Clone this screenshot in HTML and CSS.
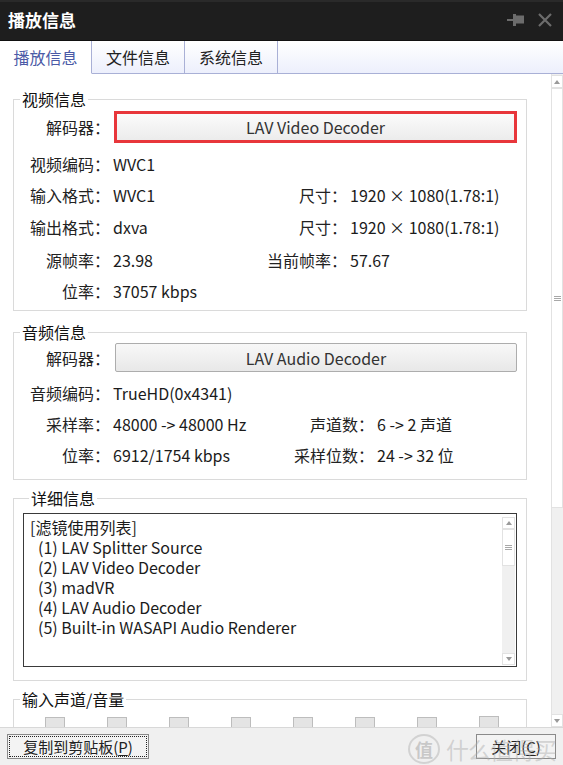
FILE: index.html
```html
<!DOCTYPE html>
<html lang="zh-CN">
<head>
<meta charset="utf-8">
<title>播放信息</title>
<link rel="stylesheet" href="styles.css">
</head>
<body>
<div class="window">
  <header class="titlebar">
    <span class="title">播放信息</span>
    <div class="tb-icons">
      <svg class="pin" width="17" height="12" viewBox="0 0 17 12"><rect x="0" y="5" width="6" height="2" fill="#6c6c6c"/><rect x="6" y="0" width="3" height="12" fill="#6c6c6c"/><rect x="9" y="1.5" width="8" height="8" fill="#6c6c6c"/></svg>
      <svg class="close" width="14" height="14" viewBox="0 0 14 14"><path d="M1 1 L13 13 M13 1 L1 13" stroke="#6c6c6c" stroke-width="2.2" fill="none"/></svg>
    </div>
  </header>
  <nav class="tabs">
    <div class="tab active">播放信息</div>
    <div class="tab">文件信息</div>
    <div class="tab">系统信息</div>
    <div class="tab-fill"></div>
  </nav>
  <div class="main">
    <div class="content">
      <fieldset class="group g-video">
        <legend>视频信息</legend>
        <div class="grid grid-video">
          <span class="lbl first">解码器：</span><div class="dec-btn hl">LAV Video Decoder</div>
          <span class="lbl">视频编码：</span><span class="val wide">WVC1</span>
          <span class="lbl">输入格式：</span><span class="val">WVC1</span><span class="lbl">尺寸：</span><span class="val">1920 × 1080(1.78:1)</span>
          <span class="lbl">输出格式：</span><span class="val">dxva</span><span class="lbl">尺寸：</span><span class="val">1920 × 1080(1.78:1)</span>
          <span class="lbl">源帧率：</span><span class="val">23.98</span><span class="lbl">当前帧率：</span><span class="val">57.67</span>
          <span class="lbl">位率：</span><span class="val wide">37057 kbps</span>
        </div>
      </fieldset>
      <fieldset class="group g-audio">
        <legend>音频信息</legend>
        <div class="grid grid-audio">
          <span class="lbl first">解码器：</span><div class="dec-btn">LAV Audio Decoder</div>
          <span class="lbl">音频编码：</span><span class="val wide">TrueHD(0x4341)</span>
          <span class="lbl">采样率：</span><span class="val">48000 -&gt; 48000 Hz</span><span class="lbl">声道数：</span><span class="val">6 -&gt; 2 声道</span>
          <span class="lbl">位率：</span><span class="val">6912/1754 kbps</span><span class="lbl">采样位数：</span><span class="val">24 -&gt; 32 位</span>
        </div>
      </fieldset>
      <fieldset class="group g-detail">
        <legend>详细信息</legend>
        <div class="listbox">
          <div class="list-text">
            <div class="line">[滤镜使用列表]</div>
            <div class="line item">(1) LAV Splitter Source</div>
            <div class="line item">(2) LAV Video Decoder</div>
            <div class="line item">(3) madVR</div>
            <div class="line item">(4) LAV Audio Decoder</div>
            <div class="line item">(5) Built-in WASAPI Audio Renderer</div>
          </div>
          <div class="sb sb-small">
            <div class="sb-btn"><span class="arr up"></span></div>
            <div class="sb-thumb t-small"><span class="grip"></span></div>
            <div class="sb-track"></div>
            <div class="sb-btn"><span class="arr down"></span></div>
          </div>
        </div>
      </fieldset>
      <fieldset class="group g-input">
        <legend>输入声道/音量</legend>
        <div class="meters">
          <span class="meter"></span><span class="meter"></span><span class="meter"></span><span class="meter"></span>
          <span class="meter"></span><span class="meter"></span><span class="meter"></span><span class="meter tall"></span>
        </div>
      </fieldset>
    </div>
    <div class="sb sb-main">
      <div class="sb-btn"><span class="arr up"></span></div>
      <div class="sb-thumb t-main"><span class="grip"></span></div>
      <div class="sb-track"></div>
      <div class="sb-btn"><span class="arr down"></span></div>
    </div>
  </div>
  <footer class="bottombar">
    <button class="wbtn copy"><span class="focus">复制到剪贴板(<u>P</u>)</span></button>
    <button class="wbtn closebtn">关闭(<u>C</u>)</button>
    <div class="watermark"><span class="wm-circle">值</span><span class="wm-text">什么值得买</span></div>
  </footer>
</div>
</body>
</html>
```
FILE: styles.css
```css
* { box-sizing: border-box; }
html, body { margin: 0; padding: 0; }
body {
  width: 563px;
  height: 765px;
  overflow: hidden;
  font-family: "Noto Sans CJK SC", "Noto Sans", sans-serif;
  font-size: 16px;
  color: #1b1b1b;
  background: #ffffff;
}
.window { width: 563px; height: 765px; display: flex; flex-direction: column; }

/* title bar */
.titlebar {
  height: 41px;
  flex: none;
  background: #1e1e1e;
  border-top: 2px solid #2a2a2a;
  border-bottom: 1px solid #111;
  display: flex;
  align-items: center;
  justify-content: space-between;
  padding: 0 11px 0 8px;
}
.title { color: #ffffff; font-weight: bold; font-size: 17px; line-height: 20px; margin-top: -2px; }
.tb-icons { display: flex; align-items: center; gap: 14px; margin-top: -2px; }
.pin { display: block; }
.close { display: block; }

/* tabs */
.tabs {
  height: 33px;
  flex: none;
  display: flex;
  background: linear-gradient(#ffffff, #eceffc);
}
.tab {
  width: 93px;
  height: 33px;
  border-right: 1px solid #a9b0d6;
  border-bottom: 1px solid #a9b0d6;
  display: flex;
  align-items: center;
  justify-content: center;
  font-size: 16px;
  line-height: 20px;
  color: #222;
  padding-bottom: 1px;
}
.tab.active { width: 92px; background: #ffffff; border-bottom-color: #ffffff; color: #4b5aa6; }
.tab-fill { flex: 1; border-bottom: 1px solid #a9b0d6; }

/* main area */
.main { flex: 1; display: flex; min-height: 0; }
.content { flex: 1; overflow: hidden; padding-top: 15px; background: #fff; }

.group {
  margin: 0 0 0 13px;
  width: 514px;
  padding: 0;
  border: 1px solid #dadada;
  min-inline-size: 0;
}
.group legend {
  margin-left: 6px;
  padding: 0 2px;
  font-size: 16px;
  line-height: 20px;
  color: #111;
}
.g-video { padding: 2px 9px 4px 0; }
.g-audio { margin-top: 11px; padding: 0 9px 8px 0; }
.g-detail { margin-top: 8px; padding: 5px 9px 13px 9px; }
.g-input { margin-top: 8px; height: 60px; padding: 0; }

.grid { display: grid; column-gap: 3px; align-items: center; }
.grid-video { grid-template-columns: 96px 141px 90px 1fr; grid-template-rows: 37px 32px 30px 34px 32px 30px; }
.grid-audio { grid-template-columns: 96px 168px 90px 1fr; grid-template-rows: 35px 32px 30px 32px; }
.lbl { text-align: right; white-space: nowrap; line-height: 20px; color: #222; }
.lbl.first { align-self: start; margin-top: 6px; }
.val { white-space: nowrap; line-height: 20px; color: #1b1b1b; }
.val.wide { grid-column: 2 / -1; }

.dec-btn {
  grid-column: 2 / -1;
  align-self: start;
  margin-left: 2px;
  height: 29px;
  margin-top: 1px;
  border: 1px solid #adadad;
  border-radius: 2px;
  background: linear-gradient(#f8f8f8, #e8e8e8);
  display: flex;
  align-items: center;
  justify-content: center;
  line-height: 20px;
  color: #333;
}
.dec-btn.hl {
  margin-left: 1px;
  margin-top: 0;
  height: 32px;
  border: 3px solid #e8363b;
  border-radius: 0;
  background: linear-gradient(#fbfbfb, #ececec);
}

/* listbox */
.listbox {
  height: 154px;
  border: 1px solid #3a3a3a;
  display: flex;
  background: #fff;
}
.list-text { flex: 1; padding: 3px 0 0 6px; }
.line { line-height: 20px; white-space: nowrap; color: #1b1b1b; }
.line.item { padding-left: 8px; }

/* scrollbars */
.sb { display: flex; flex-direction: column; background: #f0f0f0; }
.sb-small { width: 13px; margin: 3px 1px 1px 0; }
.sb-main { width: 12px; border-left: 1px solid #e2e2e2; padding-top: 1px; }
.sb-btn {
  height: 12px;
  flex: none;
  background: #fff;
  border: 1px solid #e2e2e2;
  display: flex;
  align-items: center;
  justify-content: center;
}
.sb-main .sb-btn { height: 13px; border-left: 0; }
.arr { width: 0; height: 0; border-left: 3px solid transparent; border-right: 3px solid transparent; }
.arr.up { border-bottom: 4px solid #9a9a9a; }
.arr.down { border-top: 4px solid #9a9a9a; }
.sb-thumb {
  flex: none;
  background: #fff;
  border: 1px solid #e2e2e2;
  display: flex;
  align-items: center;
  justify-content: center;
}
.sb-main .sb-thumb { border-left: 0; }
.t-small { height: 37px; }
.t-main { height: 420px; }
.grip { width: 7px; height: 5px; border-top: 1px solid #a8a8a8; border-bottom: 1px solid #a8a8a8; position: relative; }
.grip::after { content: ""; position: absolute; left: 0; right: 0; top: 1px; border-top: 1px solid #a8a8a8; }
.sb-track { flex: 1; background: #f0f0f0; }

/* channel meters */
.meters { display: flex; gap: 42px; align-items: flex-start; padding: 8px 0 0 31px; }
.meter { width: 20px; height: 16px; background: #e4e4e4; border: 1px solid #bdbdbd; }
.meter.tall { margin-top: -1px; height: 17px; }

/* bottom bar */
.bottombar {
  height: 38px;
  flex: none;
  background: #f0f0f0;
  border-top: 1px solid #d8d8d8;
  display: flex;
  justify-content: space-between;
  align-items: flex-start;
  padding: 6px 7px 0 7px;
  position: relative;
}
.wbtn {
  height: 25px;
  border: 1px solid #8a8a8a;
  background: #f3f3f3;
  font-family: "Noto Sans CJK SC", "Noto Sans", sans-serif;
  font-size: 15px;
  color: #222;
  padding: 0;
  line-height: 19px;
}
.wbtn u { text-underline-offset: 2px; }
.copy { width: 142px; padding: 1px; }
.copy .focus {
  display: flex;
  align-items: center;
  justify-content: center;
  height: 100%;
  border: 1px dotted #222;
}
.closebtn { width: 80px; margin-right: 0; }
.watermark {
  position: absolute;
  left: 408px;
  top: 6px;
  display: flex;
  align-items: center;
  gap: 6px;
  pointer-events: none;
}
.wm-circle {
  width: 32px;
  height: 30px;
  border-radius: 50%;
  border: 2px solid rgba(200,200,200,0.75);
  color: rgba(190,190,190,0.8);
  font-size: 18px;
  line-height: 26px;
  text-align: center;
  font-weight: bold;
}
.wm-text { font-size: 23px; line-height: 28px; color: rgba(170,170,170,0.45); letter-spacing: -1px; }
```
